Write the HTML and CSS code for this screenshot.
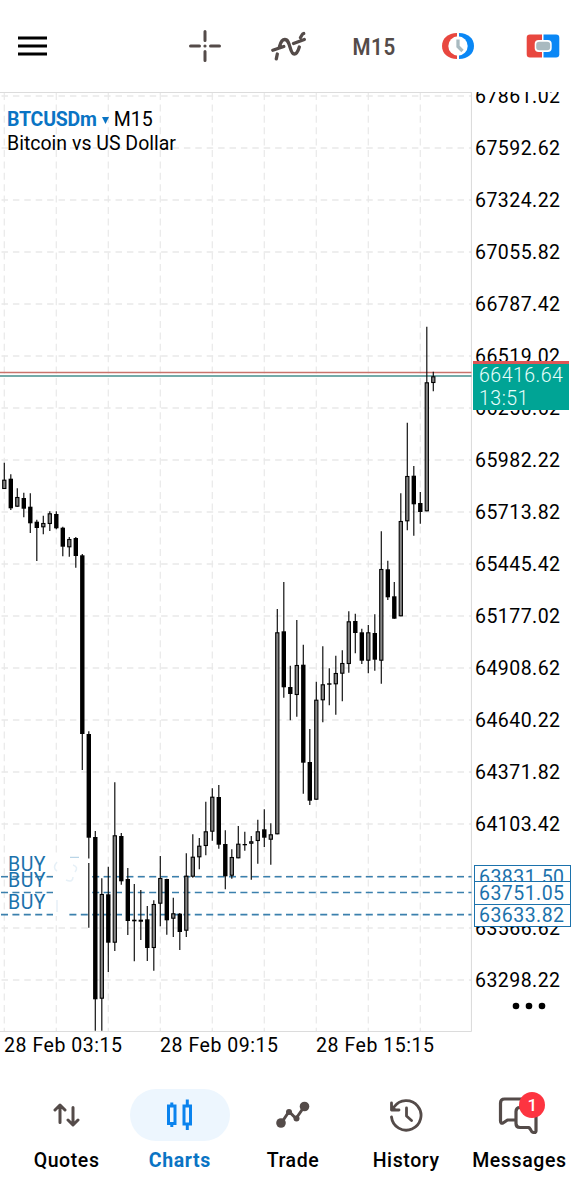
FILE: index.html
```html
<!DOCTYPE html>
<html lang="en">
<head>
<meta charset="UTF-8">
<meta name="viewport" content="width=device-width, initial-scale=1">
<title>BTCUSDm M15</title>
<link rel="stylesheet" href="styles.css">
<script src="chart.js" defer></script>
</head>
<body>
<header class="toolbar">
	<svg class="menu" width="30" height="20" viewBox="0 0 30 20"><path d="M0 2h29M0 10h29M0 18h29" stroke="#000" stroke-width="3.2"/></svg>
	<div class="tools">
		<svg width="34" height="34" viewBox="0 0 34 34" class="line"><path d="M17 2.500v9M17 22.500v9M2.500 17h9M22.500 17h9" stroke-width="3"/><circle cx="17" cy="17" r="1.600" class="dot"/></svg>
		<svg width="36" height="36" viewBox="0 0 36 36" class="line"><path d="M6.300 30.800l1-4.800M9.500 18.500C10.800 13.500 12.500 11.500 14.800 11.500c6 0 4.500 14.500 9.500 14.500 2.500 0 4-3.500 5-7M30.500 9.500l1.800-3q.5-.8 1.400-1M2.800 22.300l11-3.800M23.500 15.500l10.800-4" stroke-width="3.300"/></svg>
		<span class="period">M15</span>
		<svg width="34" height="28" viewBox="0 0 34 28">
			<path d="M16 1v26C7 27 1 21.500 1 14S7 1 16 1z" fill="#e8473f"/>
			<path d="M18 1v26c9 0 15-5.500 15-13S27 1 18 1z" fill="#0a87f5"/>
			<circle cx="17" cy="14" r="9.700" fill="#fff"/>
			<path d="M17 7.500v7l4.500 4.500" fill="none" stroke="#a9bac0" stroke-width="3.300"/>
		</svg>
		<svg width="34" height="24" viewBox="0 0 34 24">
			<path d="M4 .5h12v23H4q-3.300 0-3.300-3.300V3.800Q.7.500 4 .5z" fill="#e8473f"/>
			<path d="M17.500.5H30q3.300 0 3.300 3.300v16.400q0 3.300-3.300 3.300H17.500z" fill="#0a87f5"/>
			<rect x="8.700" y="6" width="17" height="12" rx="4" fill="#fff"/>
			<rect x="10.200" y="7.800" width="14" height="8.400" rx="3" fill="#a9bac0"/>
		</svg>
	</div>
</header>

<main class="chart">
	<section class="plot">
		<svg id="canvas" width="472" height="940" viewBox="0 92 472 940"></svg>
		<div class="symbol">
			<div><b>BTCUSDm</b><svg width="7" height="7" viewBox="0 0 7 7"><path d="M0 0h7L3.500 7z" fill="#0a74c4"/></svg>M15</div>
			<div>Bitcoin vs US Dollar</div>
		</div>
		<span class="buy buy-1">BUY</span>
		<span class="buy buy-2">BUY</span>
		<span class="buy buy-3">BUY</span>
	</section>
	<aside class="prices">
		<ul>
			<li>67861.02</li>
			<li>67592.62</li>
			<li>67324.22</li>
			<li>67055.82</li>
			<li>66787.42</li>
			<li>66519.02</li>
			<li>66250.62</li>
			<li>65982.22</li>
			<li>65713.82</li>
			<li>65445.42</li>
			<li>65177.02</li>
			<li>64908.62</li>
			<li>64640.22</li>
			<li>64371.82</li>
			<li>64103.42</li>
			<li></li>
			<li>63566.62</li>
			<li>63298.22</li>
		</ul>
		<div class="bid">66416.64<br>13:51</div>
		<div class="order order-1">63831.50</div>
		<div class="order order-3">63633.82</div>
		<div class="order order-2">63751.05</div>
		<svg class="more" width="34" height="8" viewBox="0 0 34 8"><circle cx="4" cy="4" r="3.300"/><circle cx="17" cy="4" r="3.300"/><circle cx="30" cy="4" r="3.300"/></svg>
	</aside>
</main>

<div class="times">
	<span>28 Feb 03:15</span>
	<span>28 Feb 09:15</span>
	<span>28 Feb 15:15</span>
</div>

<nav class="tabs">
	<a>
		<span class="icon"><svg width="28" height="26" viewBox="0 0 28 26" class="line"><path d="M8 20.500V3.500M3 8l5-5 5 5M21 5.500v17M16 18l5 5 5-5" stroke-width="3"/></svg></span>
		Quotes
	</a>
	<a class="active">
		<span class="icon"><svg width="28" height="32" viewBox="0 0 28 32"><path d="M2.500 7h6.500v17.500h-6.500zM5.800 3.500v3M5.800 25v3M18 7h6.500v18h-6.500zM21.300.5v6M21.300 25v6" fill="none" stroke="#0a83ee" stroke-width="3"/></svg></span>
		Charts
	</a>
	<a>
		<span class="icon"><svg width="34" height="28" viewBox="0 0 34 28" class="line"><path d="M5 22.500l8-12 7 7 8-11.500" stroke-width="3"/><circle cx="5" cy="22" r="4.800" class="dot"/><circle cx="13" cy="11" r="3" class="dot"/><circle cx="20.500" cy="17.500" r="3" class="dot"/><circle cx="28.500" cy="5.500" r="4.800" class="dot"/></svg></span>
		Trade
	</a>
	<a>
		<span class="icon"><svg width="34" height="34" viewBox="0 0 34 34" class="line"><path d="M2.500 19A14.800 14.800 0 1 0 5 9M2.500 5v7h7.500M17.500 10v8l5 4.500" stroke-width="2.800"/><path d="M2 6v7h7z" class="dot"/></svg></span>
		History
	</a>
	<a>
		<span class="icon"><svg width="42" height="38" viewBox="0 0 42 38" class="line"><path d="M18 24h-8.500l-4.500 3c-1.500.6-2.500-.2-2.500-2V7q0-4 4-4h22M22 11.500h12q4 0 4 4V35q-.3 2-2.500 1.500-2-.5-3-3L31 31.500h-9q-4 0-4-4v-12q0-4 4-4z" stroke-width="3.200"/></svg><i class="badge">1</i></span>
		Messages
	</a>
</nav>
</body>
</html>
```
FILE: styles.css
```css
body {
	margin: 0;
	width: 585px;
	height: 1200px;
	overflow: hidden;
	background: #fff;
	color: #000;
	font-family: Roboto, "Liberation Sans", sans-serif;
	font-size: 19.5px;
}

svg {
	display: block;
	flex: none;
}

.line {
	fill: none;
	stroke: #544b49;
	stroke-linecap: round;
	stroke-linejoin: round;
}

.dot {
	fill: #544b49;
	stroke: none;
}

/* toolbar */
.toolbar {
	box-sizing: border-box;
	height: 92px;
	padding: 0 25px 0 18px;
	display: flex;
	align-items: center;
	justify-content: space-between;
}

.tools {
	width: 372px;
	display: flex;
	align-items: center;
}

.tools svg:nth-child(2) {
	margin-left: 48px;
}

.tools svg:nth-child(4) {
	margin: 0 51px 0 48px;
}

.period {
	width: 44px;
	margin-left: 43px;
	text-align: center;
	color: #544b49;
	font-size: 24.5px;
	font-weight: 600;
	letter-spacing: .7px;
	transform: scaleX(.84);
}

/* chart */
.chart {
	display: grid;
	grid-template-columns: 472px 1fr;
	height: 940px;
}

.plot {
	position: relative;
}

.symbol {
	position: absolute;
	left: 7px;
	top: 16px;
	line-height: 24px;
}

.symbol div {
	display: flex;
	align-items: center;
}

.symbol b {
	color: #0a74c4;
	letter-spacing: -.2px;
}

.symbol svg {
	margin: 0 5px 0 5px;
}

.buy {
	position: absolute;
	left: 8px;
	line-height: 20px;
	color: #1c72ac;
	letter-spacing: .5px;
}

.buy-1 { top: 763px; }
.buy-2 { top: 779px; }
.buy-3 { top: 801px; }

.prices {
	position: relative;
	overflow: hidden;
	letter-spacing: .45px;
}

.prices ul {
	list-style: none;
	margin: -21px 0 0;
	padding: 0 0 0 3px;
}

.prices li {
	height: 52px;
	line-height: 52px;
}

.bid {
	position: absolute;
	left: 1px;
	top: 269px;
	width: 90px;
	height: 46px;
	padding-left: 6px;
	border-top: 3px solid #e05555;
	background: #00a495;
	color: #e8fffc;
	line-height: 23px;
	font-weight: 300;
	letter-spacing: .5px;
}

.order {
	position: absolute;
	left: 2px;
	box-sizing: border-box;
	width: 97px;
	height: 24px;
	padding-left: 4px;
	border: 1.5px solid #1c72ac;
	background: #fff;
	color: #1c72ac;
	line-height: 24px;
}

.order-1 { top: 773px; }
.order-2 { top: 789px; }
.order-3 { top: 811px; }

.more {
	position: absolute;
	left: 40px;
	top: 910px;
}

.times {
	display: flex;
	padding-left: 4px;
	height: 57px;
	line-height: 28px;
	letter-spacing: .55px;
}

.times span {
	width: 156px;
}

/* bottom tabs */
.tabs {
	display: grid;
	grid-template-columns: repeat(5, 1fr);
	padding: 0 9px 0 10px;
}

.tabs a {
	display: flex;
	flex-direction: column;
	align-items: center;
	font-weight: 500;
	line-height: 24px;
	letter-spacing: .6px;
}

.icon {
	position: relative;
	display: flex;
	align-items: center;
	justify-content: center;
	width: 100px;
	height: 52px;
	margin-bottom: 8px;
	border-radius: 26px;
}

.tabs a:first-child svg {
	margin-right: 2px;
}

.tabs .active {
	color: #0a74c4;
	font-weight: 700;
}

.active .icon {
	background: #edf6fe;
}

.badge {
	position: absolute;
	left: 50px;
	top: 3px;
	width: 26px;
	height: 26px;
	border-radius: 50%;
	background: #fd3440;
	color: #fff;
	font-size: 17px;
	font-style: normal;
	line-height: 26px;
	text-align: center;
	letter-spacing: 0;
}
```
FILE: chart.js
```javascript
// high, body top, body bottom, low, 1 = up / 0 = down
var candles = [
	[462.7,479.7,489,489,1], [474.3,478.7,508.3,510,0], [488.3,497,506.7,506.7,1],
	[492.7,498,508.7,517.3,0], [493.3,506.7,523.3,533,0], [519.7,521.7,528,561,0],
	[515.7,523,527.3,534.3,1], [511.3,513.3,524,531,1], [511.3,514,528.3,529.3,0],
	[526.7,527.7,546.7,556.3,0], [537,539,547.3,556.7,1], [537,538,556,567.7,0],
	[554,555.3,734,770,0], [731.3,734,837.7,927.7,0], [831,837,999.3,1030.7,0],
	[878.3,894,998.7,1030.7,1], [866.7,894.3,942.7,972,0], [782.3,835.3,942.7,951,1],
	[833,836,881.3,884.7,0], [868,879,921,935,0], [884,919.7,921.3,961.3,0],
	[890,919.7,921.7,940,0], [906,919.3,948,961,0], [900.3,904,948,970.7,1],
	[856,878,903.7,926.3,1], [878.7,879,920.3,934.7,0], [897.7,913.3,918.7,937,1],
	[913,913.7,932,950,0], [853.3,875.7,930.7,937,1], [834.3,856.7,876.7,877.7,1],
	[838,845.7,857.3,869.3,1], [801.7,831.3,846,855.3,1], [788.3,796.7,831.7,840.7,1],
	[785,797,844.7,848.7,0], [830.3,844,876.3,889.3,0], [849.3,857,875.7,878.7,1],
	[826,843.7,858.3,858.3,1], [831.7,844,845.3,850.7,0], [836,841.3,843.7,879.7,1],
	[819.7,831.3,841,863.7,1], [809.3,829.3,837.7,847,0], [823.3,834.3,839.7,864.7,1],
	[609,632.3,834.3,834.3,1], [582,631.3,687.3,697.7,0], [665.7,687,694,720.3,0],
	[620,665,695,716.7,1], [644.7,664.7,762.7,793.7,0], [729,762,800.7,805,0],
	[681.7,699.7,799.7,799.7,1], [646.3,684.3,700.3,722.3,1], [668.3,683.3,684.7,705.3,0],
	[655.7,673,684.3,714.7,1], [650.3,663,673.7,701.3,1], [611.3,621.3,664,672.7,1],
	[613.7,621,633,653.3,0], [628.7,632.3,660.7,664,0], [625,632.3,660.7,673.3,1],
	[614.3,633,659.7,670.7,0], [531.3,569,660.7,683.7,1], [560.7,569.3,597.3,600,0],
	[582,596.3,618.7,618.7,0], [493.3,521,616.3,616.3,1], [422.7,476,521.3,530.3,1],
	[466,475.7,504.3,535.7,0], [492,503,512,523.7,0], [326.7,382.3,511.3,511.3,1],
	[371.7,376.3,383,391.3,1]
];
var STEP = 6.5, LEFT = 4.3, TOP = 92, BOTTOM = 1031.5, RIGHT = 471.5;
var svg = document.getElementById("canvas");

function add(name, attrs){
	var el = document.createElementNS("http://www.w3.org/2000/svg", name);
	for(var key in attrs) el.setAttribute(key, attrs[key]);
	svg.appendChild(el);
}

function line(x1, y1, x2, y2, color, width, dash){
	add("path", {d: "M" + x1 + " " + y1 + "L" + x2 + " " + y2, stroke: color, "stroke-width": width, "stroke-dasharray": dash || "none"});
}

// grid
for(var x = LEFT; x < RIGHT; x += STEP * 8)
	line(x, TOP + 1, x, BOTTOM, "#e9e9e9", 1.2, "7 4.4");
for(var y = 96; y < BOTTOM; y += 52)
	line(1.5, y, RIGHT, y, "#e9e9e9", 1.4, "6.5 4.9");
line(0, 92.5, RIGHT, 92.5, "#dcdcdc", 1.2);
line(0, BOTTOM, RIGHT, BOTTOM, "#dcdcdc", 1.2);
line(RIGHT, TOP, RIGHT, BOTTOM, "#dcdcdc", 1.2);

// open orders
[876.8, 892.5, 914.6].forEach(function(y){
	line(1, y, RIGHT, y, "#3b80ad", 1.6, "7 4.4");
});

// cleared area next to the order labels
add("path", {d: "M53 853h35v50l-21 6v7H53z", fill: "#fff"});
line(70, 857.3, 79, 857.3, "#a9cbe2", 1);
add("path", {d: "M57 862q-5 6 0 9M73 865q6 2 2 7M66 880q7 3 7-3M57 900v12", fill: "none", stroke: "#e6f0f7", "stroke-width": 1.5});

// bid and ask
line(0, 372.5, RIGHT, 372.5, "#c9736c", 1.3);
line(0, 375.9, RIGHT, 375.9, "#468f8c", 1.5);

candles.forEach(function(c, i){
	var x = LEFT + i * STEP;
	line(x, c[0], x, c[3], "#111", 1.2);
	if(c[4])
		add("rect", {x: x - 1.6, y: c[1] + .5, width: 3.2, height: c[2] - c[1] - 1, fill: "#858585", stroke: "#000", "stroke-width": 1.1});
	else
		add("rect", {x: x - 2.2, y: c[1], width: 4.4, height: c[2] - c[1], fill: "#000"});
});
line(88.8, 858.5, 88.8, 863, "#fff", 3);
```
